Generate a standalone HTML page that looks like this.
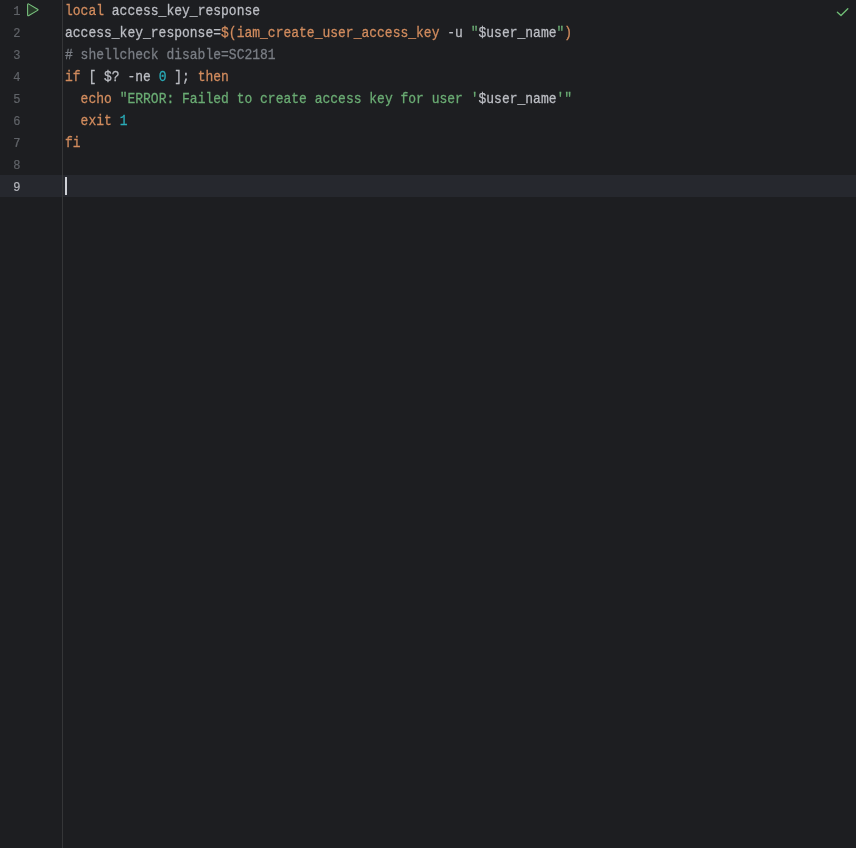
<!DOCTYPE html>
<html>
<head>
<meta charset="utf-8">
<style>
html,body{margin:0;padding:0;}
body{width:856px;height:848px;overflow:hidden;background:#1D1E21;position:relative;font-family:"Liberation Mono",monospace;}
.gsep{position:absolute;left:62px;top:0;width:1px;height:848px;background:#353638;}
.caret-row{position:absolute;left:0;top:175px;width:856px;height:22px;background:#26282E;}
.ln{position:absolute;left:0;width:20.5px;text-align:right;font-size:12px;line-height:22px;height:22px;color:#606368;margin-top:2px;transform:scaleY(1.1);transform-origin:0 14.2px;will-change:transform;-webkit-text-stroke:0.2px currentColor;}
.ln.cur{color:#B4B6BC;}
.code{position:absolute;left:65px;top:1px;will-change:transform;-webkit-text-stroke:0.25px currentColor;font-size:13px;line-height:22px;color:#BCBEC4;}
.code div{height:22px;white-space:pre;transform:scaleY(1.12);transform-origin:0 14.46px;}
.k{color:#D28C5E;}
.c{color:#7A7E85;}
.s{color:#6AAB73;}
.n{color:#2AACB8;}
.caret{position:absolute;left:65px;top:177px;width:2px;height:18px;background:#CED0D6;}
svg{position:absolute;}
</style>
</head>
<body>
<div class="caret-row"></div>
<div class="gsep"></div>
<div class="ln" style="top:-1px">1</div>
<div class="ln" style="top:21px">2</div>
<div class="ln" style="top:43px">3</div>
<div class="ln" style="top:65px">4</div>
<div class="ln" style="top:87px">5</div>
<div class="ln" style="top:109px">6</div>
<div class="ln" style="top:131px">7</div>
<div class="ln" style="top:153px">8</div>
<div class="ln cur" style="top:175px">9</div>
<svg style="left:25px;top:1px" width="16" height="18" viewBox="0 0 16 18">
<path d="M2.6 3.8 Q2.6 2.3 3.9 3.1 L12.6 8.2 Q13.6 8.8 12.6 9.4 L3.9 14.5 Q2.6 15.3 2.6 13.8 Z" fill="#263828" stroke="#7AC27F" stroke-width="1.05" stroke-linejoin="round"/>
</svg>
<svg style="left:834px;top:4px" width="18" height="16" viewBox="0 0 18 16">
<path d="M3.4 8.3 L7 11.5 L13.8 4.7" fill="none" stroke="#70BE76" stroke-width="1.35" stroke-linecap="round" stroke-linejoin="round"/>
</svg>
<div class="code">
<div><span class="k">local</span> access_key_response</div>
<div>access_key_response=<span class="k">$(iam_create_user_access_key</span> -u <span class="s">"</span>$user_name<span class="s">"</span><span class="k">)</span></div>
<div><span class="c"># shellcheck disable=SC2181</span></div>
<div><span class="k">if</span> [ $? -ne <span class="n">0</span> ]; <span class="k">then</span></div>
<div>  <span class="k">echo</span> <span class="s">"ERROR: Failed to create access key for user '</span>$user_name<span class="s">'"</span></div>
<div>  <span class="k">exit</span> <span class="n">1</span></div>
<div><span class="k">fi</span></div>
<div> </div>
<div> </div>
</div>
<div class="caret"></div>
</body>
</html>
